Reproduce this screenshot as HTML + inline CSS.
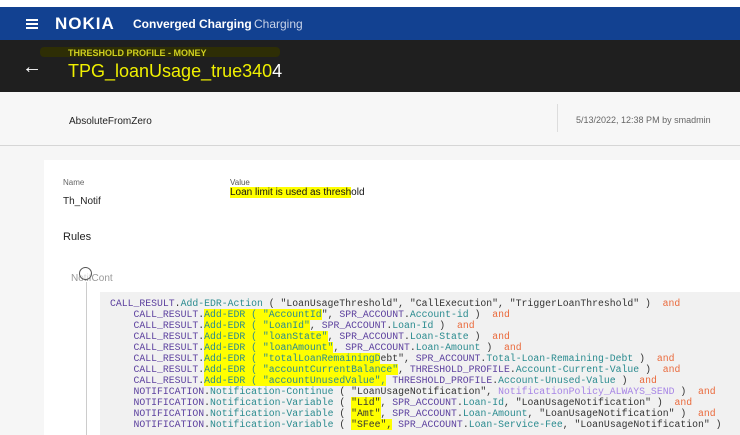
<!DOCTYPE html>
<html><head><style>
body{margin:0;width:740px;height:435px;overflow:hidden;background:#f6f6f6;font-family:"Liberation Sans",sans-serif;position:relative}
.a{position:absolute}
.hl{background:#ffff00}
.code{position:absolute;left:100px;top:292px;width:640px;height:143px;background:#f1f1f1}
.code pre{margin:0;position:absolute;left:10px;top:6px;font-family:"Liberation Mono",monospace;font-size:9.8px;line-height:11px;color:#333}
.p{color:#5b3f9e}.t{color:#2a8b8f}.o{color:#ea6a3c}.lp{color:#a785e6}
</style></head><body>
<div class="a" style="left:0;top:0;width:740px;height:7px;background:#fff"></div>
<div class="a" style="left:0;top:7px;width:740px;height:33px;background:#124191"></div>
<div class="a" style="left:26px;top:19px;width:12px;height:2px;background:#fff;box-shadow:0 4px #fff,0 8px #fff"></div>
<div class="a" style="left:55px;top:14px;color:#fff;font-weight:bold;font-size:17px;letter-spacing:1px">NOKIA</div>
<div class="a" style="left:133px;top:17px;color:#fff;font-weight:bold;font-size:12px">Converged Charging</div>
<div class="a" style="left:254px;top:17px;color:#c9d3e8;font-size:12px">Charging</div>
<div class="a" style="left:0;top:40px;width:740px;height:52px;background:#1f1f1f"></div>
<div class="a" style="left:40px;top:47px;width:240px;height:10px;background:#2e2e05;border-radius:4px"></div>
<div class="a" style="left:68px;top:48px;color:#cfcf20;font-size:9px;font-weight:bold">THRESHOLD PROFILE - MONEY</div>
<div class="a" style="left:22px;top:56px;color:#fff;font-size:20px">&#8592;</div>
<div class="a" style="left:68px;top:61px;color:#f0f000;font-size:18px">TPG_loanUsage_true340<span style="color:#fff">4</span></div>
<div class="a" style="left:0;top:92px;width:740px;height:53px;background:#f7f7f7;border-bottom:1px solid #d6d6d6"></div>
<div class="a" style="left:69px;top:116px;font-size:10px;color:#222">AbsoluteFromZero</div>
<div class="a" style="left:557px;top:104px;width:1px;height:28px;background:#ddd"></div>
<div class="a" style="left:576px;top:115px;font-size:9px;color:#666">5/13/2022, 12:38 PM by smadmin</div>
<div class="a" style="left:44px;top:160px;width:696px;height:275px;background:#fff"></div>
<div class="a" style="left:63px;top:178px;font-size:8px;color:#666">Name</div>
<div class="a" style="left:63px;top:196px;font-size:10px;color:#222">Th_Notif</div>
<div class="a" style="left:230px;top:178px;font-size:8px;color:#555">Value</div>
<div class="a" style="left:230px;top:187px;font-size:10px;color:#111"><span class="hl">Loan limit is used as thresh</span>old</div>
<div class="a" style="left:63px;top:231px;font-size:11px;color:#222">Rules</div>
<div class="a" style="left:71px;top:273px;font-size:10px;color:#999">NotifCont</div>
<div class="a" style="left:79px;top:267px;width:11px;height:11px;border:1px solid #555;border-radius:50%;background:rgba(255,255,255,.6)"></div>
<div class="a" style="left:86px;top:282px;width:1px;height:153px;background:#ccc"></div>
<div class="code"><pre><span class="p">CALL_RESULT</span>.<span class="t">Add-EDR-Action</span> ( "LoanUsageThreshold", "CallExecution", "TriggerLoanThreshold" )  <span class="o">and</span>
    <span class="p">CALL_RESULT</span>.<span class="t hl">Add-EDR ( "AccountId</span>", <span class="p">SPR_ACCOUNT</span>.<span class="t">Account-id</span> )  <span class="o">and</span>
    <span class="p">CALL_RESULT</span>.<span class="t hl">Add-EDR ( "LoanId"</span>, <span class="p">SPR_ACCOUNT</span>.<span class="t">Loan-Id</span> )  <span class="o">and</span>
    <span class="p">CALL_RESULT</span>.<span class="t hl">Add-EDR ( "loanState"</span>, <span class="p">SPR_ACCOUNT</span>.<span class="t">Loan-State</span> )  <span class="o">and</span>
    <span class="p">CALL_RESULT</span>.<span class="t hl">Add-EDR ( "loanAmount"</span>, <span class="p">SPR_ACCOUNT</span>.<span class="t">Loan-Amount</span> )  <span class="o">and</span>
    <span class="p">CALL_RESULT</span>.<span class="t hl">Add-EDR ( "totalLoanRemainingD</span>ebt", <span class="p">SPR_ACCOUNT</span>.<span class="t">Total-Loan-Remaining-Debt</span> )  <span class="o">and</span>
    <span class="p">CALL_RESULT</span>.<span class="t hl">Add-EDR ( "accountCurrentBalance"</span>, <span class="p">THRESHOLD_PROFILE</span>.<span class="t">Account-Current-Value</span> )  <span class="o">and</span>
    <span class="p">CALL_RESULT</span>.<span class="t hl">Add-EDR ( "accountUnusedValue",</span> <span class="p">THRESHOLD_PROFILE</span>.<span class="t">Account-Unused-Value</span> )  <span class="o">and</span>
    <span class="p">NOTIFICATION</span>.<span class="t">Notification-Continue</span> ( "LoanUsageNotification", <span class="lp">NotificationPolicy_ALWAYS_SEND</span> )  <span class="o">and</span>
    <span class="p">NOTIFICATION</span>.<span class="t">Notification-Variable</span> ( <span class="hl">"Lid"</span>, <span class="p">SPR_ACCOUNT</span>.<span class="t">Loan-Id</span>, "LoanUsageNotification" )  <span class="o">and</span>
    <span class="p">NOTIFICATION</span>.<span class="t">Notification-Variable</span> ( <span class="hl">"Amt"</span>, <span class="p">SPR_ACCOUNT</span>.<span class="t">Loan-Amount</span>, "LoanUsageNotification" )  <span class="o">and</span>
    <span class="p">NOTIFICATION</span>.<span class="t">Notification-Variable</span> ( <span class="hl">"SFee",</span> <span class="p">SPR_ACCOUNT</span>.<span class="t">Loan-Service-Fee</span>, "LoanUsageNotification" )</pre></div>
</body></html>
